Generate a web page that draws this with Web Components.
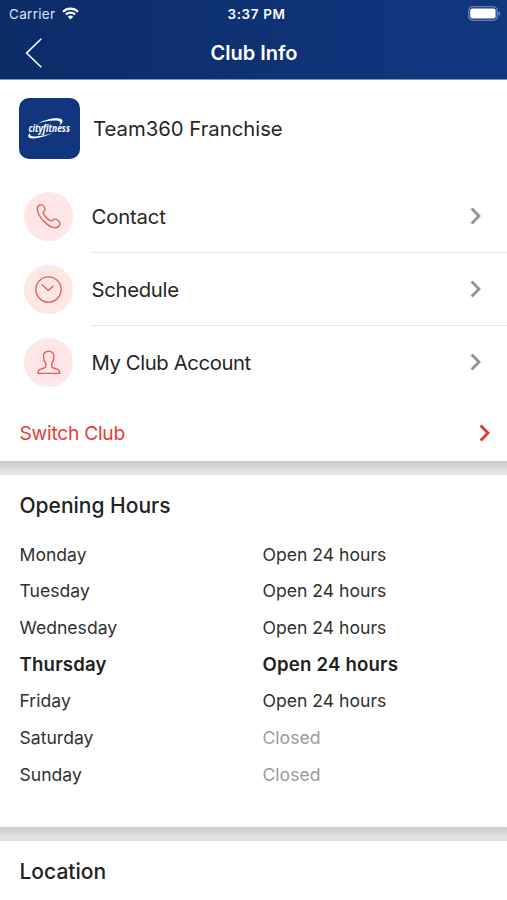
<!DOCTYPE html>
<html lang="en">
<head>
<meta charset="utf-8">
<title>Club Info</title>
<style>
html,body{margin:0;height:100%;overflow:hidden;background:#fff}
body{font-family:Inter,"Liberation Sans",sans-serif;color:#262626}
</style>
</head>
<body>
<club-screen></club-screen>
<script>
const define = (name, html, setup) => customElements.define(name, class extends HTMLElement {
  constructor() {
    super();
    this.attachShadow({mode: 'open'}).innerHTML = html;
  }
  connectedCallback() { if (setup) setup(this, this.shadowRoot); }
});

define('status-bar', `<style>
:host{display:grid;grid-template-columns:1fr auto 1fr;align-items:center;height:27px;padding:0 6px 0 9px;box-sizing:border-box;color:#fff;font-size:13.5px}
.left{display:flex;align-items:center;gap:7px;letter-spacing:.3px;color:#dfe7f6}
.left span{width:46px}
.time{font-weight:600;font-size:13.5px;letter-spacing:.6px;padding-left:3px}
.right{display:flex;justify-content:flex-end}
svg{display:block}
</style>
<div class="left"><span>Carrier</span><svg width="17" height="13" viewBox="0 0 17 13" fill="none" stroke="#fff" stroke-width="2.1"><path d="M1 4.7a10.6 10.6 0 0 1 15 0M3.8 7.6a6.7 6.7 0 0 1 9.4 0"/><path d="M8.5 12.6 5.7 9.8a4 4 0 0 1 5.6 0z" fill="#fff" stroke="none"/></svg></div>
<div class="time">3:37 PM</div>
<div class="right"><svg width="33" height="15" viewBox="0 0 33 15"><rect x=".8" y=".8" width="28.4" height="13.4" rx="3.8" fill="none" stroke="#8196c2" stroke-width="1.1"/><rect x="2.2" y="2.4" width="25.4" height="10.2" rx="2" fill="#fff"/><path d="M30.5 5.3q1.5.5 1.5 2.2t-1.5 2.2z" fill="#8196c2"/></svg></div>`);

define('nav-bar', `<style>
:host{display:grid;grid-template-columns:1fr auto 1fr;align-items:center;height:51px;padding:0 24px 0 25px;box-sizing:border-box;color:#fff}
h1{font-size:20px;font-weight:600;margin:0;line-height:24px}
svg{display:block}
</style>
<svg width="18" height="30" viewBox="0 0 18 30" fill="none" stroke="#fff" stroke-width="1.5"><path d="M16.3.8 1.6 15.1 16.3 29.3"/></svg>
<h1><slot></slot></h1>`);

define('club-header', `<style>
:host{display:flex;align-items:center;gap:13px;height:100px;padding:0 19px 4px;box-sizing:border-box;font-size:20.3px}
.logo{width:61px;height:61px;border-radius:10px;background:#12357f;display:block;flex:none}
</style>
<svg class="logo" viewBox="0 0 61 61"><g fill="#fff"><text x="9.4" y="34.2" font-family="Open Sans" font-size="10.5" font-weight="700" font-style="italic" textLength="41.5" lengthAdjust="spacingAndGlyphs">cityfitness</text><path d="M18.5 25.5C27 20.8 38.5 18.8 42.5 21.2C45 23 43 25.8 40.4 27.5C41.6 25.5 42 23.4 38.8 22.7C34 21.8 26 23.2 18.5 25.5z"/><path d="M11.4 34.6C7.5 38 8.8 41 15 40.4C21 40 29 37.6 34.8 34.6C28 37 20 38.8 14.7 38.4C11.2 38.1 10.2 36.8 11.4 34.6z"/></g></svg>
<span><slot></slot></span>`);

const icons = {
  phone: '<path d="M1.3 5C1.1 2.6 2.8.9 5 .9 7.1.9 8.8 2.9 9 4.9 9.2 6.9 7.2 7.5 7.3 9.1 7.5 11.1 13.2 17 15.3 16.8 16.9 16.6 17.1 15.1 19 15.1 21.2 15.1 23.8 17.2 23.9 19.5 24 22 21.5 23.9 18.5 23.7 12.5 23.2 1.7 13.2 1.3 5z"/>',
  clock: '<circle cx="12.5" cy="12.5" r="12.6"/><path d="M6.3 7.7 12.3 13.4 17 9.2"/>',
  person: '<path d="M12.7 1.2c3.2 0 5.3 2.3 5.3 5.5 0 2.6-.8 5.1-2.3 6.5v2.7c0 1.2.5 1.7 1.8 2.1l3.7 1.1c1.9.7 2.500 2.100 2.500 4.300H2c0-2.200.6-3.600 2.500-4.300L8 18c1.300-.4 1.800-.9 1.800-2.100v-2.700C8.300 11.800 7.500 9.300 7.500 6.700c0-3.200 2-5.500 5.200-5.500z"/>'
};
const chevron = '<svg class="chev" width="12" height="18" viewBox="0 0 12 18" fill="none" stroke="currentColor" stroke-width="2.8"><path d="M1.6 1.5 9 9 1.6 16.5"/></svg>';

define('menu-row', `<style>
:host{display:flex;height:73.2px;padding-left:24px;box-sizing:border-box;gap:18.5px;font-size:20.3px;letter-spacing:-.3px}
:host([icon=phone]){letter-spacing:-.15px}
:host([icon=person]){letter-spacing:-.4px}
.disc{width:49px;height:49px;border-radius:50%;background:#fde7e7;display:grid;place-items:center;align-self:center;flex:none}
.disc svg{display:block;overflow:visible}
.body{flex:1;display:flex;align-items:center;justify-content:space-between;padding-right:25.5px;border-bottom:1.5px solid #e6e6e6;box-sizing:border-box}
:host([last]) .body{border-color:transparent}
.chev{color:#929292;display:block}
</style>
<div class="disc"><svg width="25" height="25" viewBox="0 0 25 25" fill="none" stroke="#ee5a52" stroke-width="1.35" stroke-linejoin="round" stroke-linecap="round"></svg></div>
<div class="body"><span><slot></slot></span>${chevron}</div>`,
(el, root) => { root.querySelector('.disc svg').innerHTML = icons[el.getAttribute('icon')]; });

define('switch-link', `<style>
:host{display:flex;align-items:center;justify-content:space-between;height:61px;padding:5px 16px 0 19.5px;box-sizing:border-box;font-size:19.2px;letter-spacing:-.25px;color:#e73d35}
.chev{color:#e5352b;display:block}
</style><span><slot></slot></span>${chevron}`);

define('section-gap', `<style>
:host{display:block;height:14px;flex:none;background:linear-gradient(#c9c9c9,#d5d5d5 35%,#e2e2e2 65%,#e3e3e3)}
</style>`);

define('section-title', `<style>
:host{display:block;flex:none;padding:0 19.5px;font-size:21px;font-weight:500;line-height:62px;color:#222}
</style><slot></slot>`);

define('hours-row', `<style>
:host{display:grid;grid-template-columns:243px 1fr;align-items:center;height:36.67px;padding:0 19.5px;font-size:17.6px;color:#303030}
:host([today]){font-weight:600;color:#202020;font-size:18.6px;letter-spacing:.2px}
:host([closed]) .value{color:#9b9b9b}
</style><span><slot></slot></span><span class="value"><slot name="value"></slot></span>`);

define('club-screen', `<style>
:host{display:flex;flex-direction:column;height:900px;width:507px;overflow:hidden;background:#fff}
header{height:80px;flex:none;background:linear-gradient(90deg,#0c2c68,#113780);border-bottom:1px solid #8496bd;box-sizing:border-box}
.club{height:381px;flex:none}
.hours{height:352px;flex:none}
.list{margin-top:-1px}
</style>
<header><status-bar></status-bar><nav-bar>Club Info</nav-bar></header>
<div class="club">
<club-header>Team360 Franchise</club-header>
<menu-row icon="phone">Contact</menu-row>
<menu-row icon="clock">Schedule</menu-row>
<menu-row icon="person" last>My Club Account</menu-row>
<switch-link>Switch Club</switch-link>
</div>
<section-gap></section-gap>
<div class="hours">
<section-title>Opening Hours</section-title>
<div class="list">
${[['Monday',1],['Tuesday',1],['Wednesday',1],['Thursday',1],['Friday',1],['Saturday',0],['Sunday',0]].map(([d,o]) =>
`<hours-row${d==='Thursday'?' today':''}${o?'':' closed'}>${d}<span slot="value">${o?'Open 24 hours':'Closed'}</span></hours-row>`).join('')}
</div>
</div>
<section-gap></section-gap>
<section-title>Location</section-title>`);
</script>
</body>
</html>
